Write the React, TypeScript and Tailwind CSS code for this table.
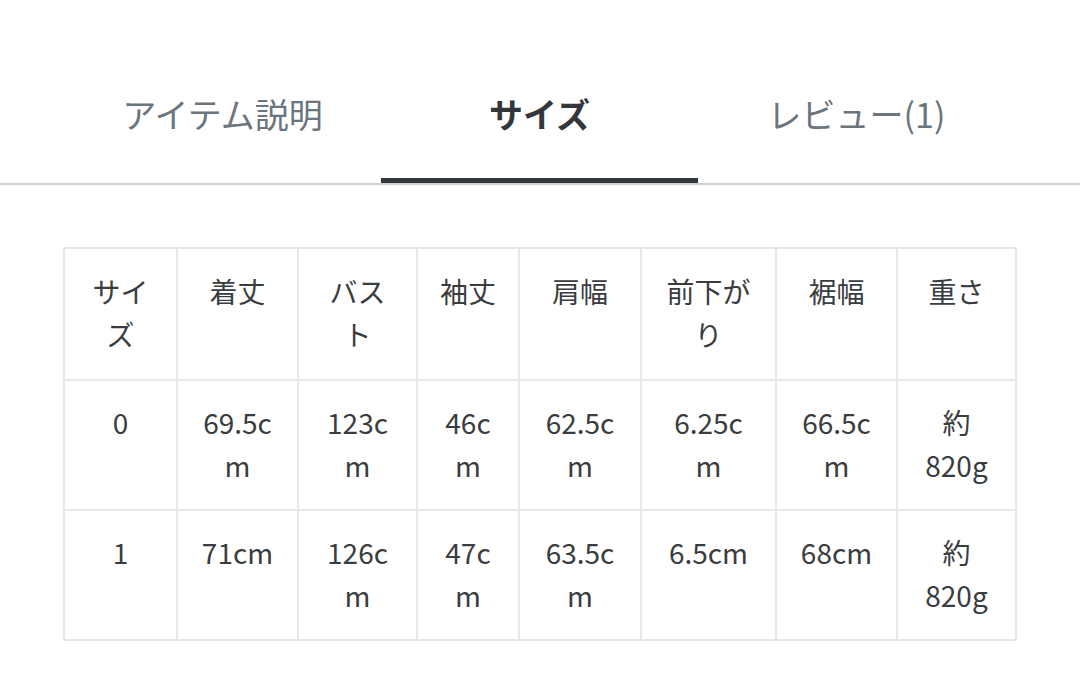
import React from "react";

const headers = ["サイズ", "着丈", "バスト", "袖丈", "肩幅", "前下がり", "裾幅", "重さ"];
const rows = [
  ["0", "69.5cm", "123cm", "46cm", "62.5cm", "6.25cm", "66.5cm", "約820g"],
  ["1", "71cm", "126cm", "47cm", "63.5cm", "6.5cm", "68cm", "約820g"],
];
const widths = [113, 121, 119, 102, 122, 135, 121, 119];

export default function App() {
  const tabs = [
    { label: "アイテム説明", active: false },
    { label: "サイズ", active: true },
    { label: "レビュー(1)", active: false },
  ];
  return (
    <div
      className="w-[1080px] h-[700px] bg-white overflow-hidden"
      style={{ fontFamily: '"Noto Sans CJK JP", "Noto Sans", sans-serif' }}
    >
      <div className="pt-[90px] border-b-2 border-[#d0d0d0]">
        <div className="mx-[64px] w-[951px] flex">
          {tabs.map((t) => (
            <div key={t.label} className="flex-1 flex flex-col items-center">
              <div
                className={
                  "text-[34px] leading-[48px] pb-[40px] " +
                  (t.active ? "font-bold text-[#33373b]" : "text-[#6b757d]")
                }
              >
                {t.label}
              </div>
              <div className={"h-[5px] w-full " + (t.active ? "bg-[#33383d]" : "bg-transparent")} />
            </div>
          ))}
        </div>
      </div>
      <div className="mt-[62px] ml-[63px]">
        <table className="table-fixed border-collapse w-[952px] text-[28px] leading-[43px] text-[#3a3d40]">
          <colgroup>
            {widths.map((w, i) => (
              <col key={i} style={{ width: w }} />
            ))}
          </colgroup>
          <thead>
            <tr>
              {headers.map((h) => (
                <th
                  key={h}
                  className="border-2 border-[#e8e8e8] font-normal align-top text-center px-[20px] pt-[21px] pb-[23px] [overflow-wrap:anywhere]"
                >
                  {h}
                </th>
              ))}
            </tr>
          </thead>
          <tbody>
            {rows.map((r, ri) => (
              <tr key={ri}>
                {r.map((c, ci) => (
                  <td
                    key={ci}
                    className="border-2 border-[#e8e8e8] align-top text-center px-[20px] pt-[20px] pb-[22px] [overflow-wrap:anywhere]"
                  >
                    {c}
                  </td>
                ))}
              </tr>
            ))}
          </tbody>
        </table>
      </div>
    </div>
  );
}
